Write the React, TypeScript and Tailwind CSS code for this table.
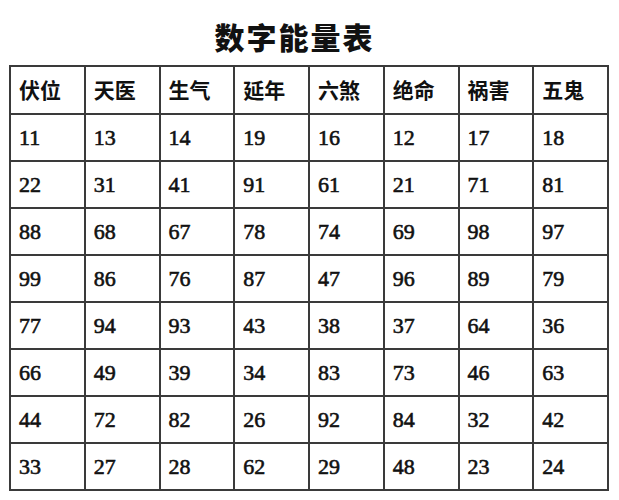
const headers = ['伏位', '天医', '生气', '延年', '六煞', '绝命', '祸害', '五鬼']

const rows = [
  ['11', '13', '14', '19', '16', '12', '17', '18'],
  ['22', '31', '41', '91', '61', '21', '71', '81'],
  ['88', '68', '67', '78', '74', '69', '98', '97'],
  ['99', '86', '76', '87', '47', '96', '89', '79'],
  ['77', '94', '93', '43', '38', '37', '64', '36'],
  ['66', '49', '39', '34', '83', '73', '46', '63'],
  ['44', '72', '82', '26', '92', '84', '32', '42'],
  ['33', '27', '28', '62', '29', '48', '23', '24'],
]

export default function App() {
  return (
    <div className="w-[619px] h-[500px] bg-white overflow-hidden">
      {/* Title */}
      <div className="h-[65px] flex items-center justify-center">
        <h1
          className="text-[30px] font-black tracking-[2px] text-[#111] mt-[8px] mr-[30px]"
          style={{ fontFamily: '"Noto Sans CJK SC", sans-serif' }}
        >
          数字能量表
        </h1>
      </div>

      {/* Table */}
      <table className="ml-[9px] w-[600px] table-fixed border-collapse border-2 border-[#3a3a3a]">
        <thead>
          <tr className="h-[48px]">
            {headers.map((h) => (
              <th
                key={h}
                className="border-2 border-[#3a3a3a] text-left pl-[8px] text-[21px] font-bold text-[#111]"
                style={{ fontFamily: '"Noto Sans CJK SC", sans-serif' }}
              >
                {h}
              </th>
            ))}
          </tr>
        </thead>
        <tbody>
          {rows.map((r, i) => (
            <tr key={i} className="h-[47px]">
              {r.map((n, j) => (
                <td
                  key={j}
                  className="border-2 border-[#3a3a3a] pl-[8px] text-[22px] font-normal text-[#111] [-webkit-text-stroke:0.6px_#111]"
                  style={{ fontFamily: '"Liberation Serif", serif' }}
                >
                  {n}
                </td>
              ))}
            </tr>
          ))}
        </tbody>
      </table>
    </div>
  )
}
